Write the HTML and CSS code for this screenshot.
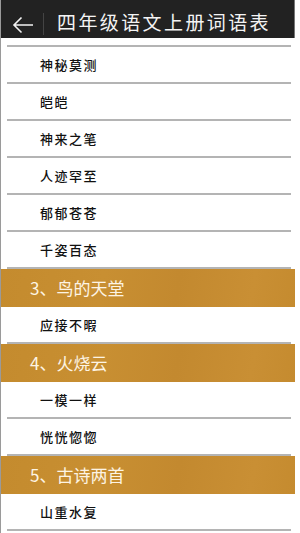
FILE: index.html
```html
<!DOCTYPE html>
<html lang="zh-CN">

<head>
    <meta charset="UTF-8">
    <meta name="viewport" content="width=device-width, initial-scale=1.0">
    <link rel="stylesheet" href="styles.css">
</head>

<body>
    <div class="screen">
        <div class="topbar">
            <span class="back">
                <svg width="22" height="18" viewBox="0 0 22 18">
                    <path d="M21 9H2M9.5 1.5L2 9l7.5 7.5" fill="none" stroke="#f2f2f2" stroke-width="1.6" />
                </svg>
            </span>
            <span class="divider"></span>
            <h1 class="title">四年级语文上册词语表</h1>
        </div>

        <ul class="words">
            <li class="word">神秘莫测</li>
            <li class="word">皑皑</li>
            <li class="word">神来之笔</li>
            <li class="word">人迹罕至</li>
            <li class="word">郁郁苍苍</li>
            <li class="word">千姿百态</li>
            <li class="lesson">3、鸟的天堂</li>
            <li class="word">应接不暇</li>
            <li class="lesson">4、火烧云</li>
            <li class="word">一模一样</li>
            <li class="word">恍恍惚惚</li>
            <li class="lesson">5、古诗两首</li>
            <li class="word">山重水复</li>
        </ul>
    </div>
</body>

</html>
```

FILE: styles.css
```css
html {
    background-color: #fff;
    font-family: "Noto Sans CJK SC", "Noto Sans", sans-serif;
}

body {
    margin: 0;
}

.screen {
    width: 295px;
    height: 533px;
    overflow: hidden;
    border-left: 1px solid #9a9a9a;
    box-sizing: border-box;
}

.topbar {
    height: 38px;
    background-color: #222;
    border-right: 1px solid #777;
    display: flex;
    align-items: center;
    padding-top: 4px;
    box-sizing: border-box;
}

.back {
    width: 40px;
    display: flex;
    justify-content: center;
    padding-left: 2px;
    padding-top: 8px;
}

.divider {
    width: 1px;
    height: 22px;
    margin-top: 6px;
    background-color: #444;
}

.title {
    margin: 0 0 0 13px;
    font-size: 19px;
    font-weight: normal;
    letter-spacing: 2.4px;
    color: #f4f4f4;
    line-height: 1;
}

.words {
    list-style: none;
    margin: 7px 0 0;
    padding: 0;
    border-top: 2px solid #b4b4b4;
    margin-left: 6px;
    margin-right: 4px;
}

.word {
    height: 35px;
    line-height: 35px;
    padding-left: 33px;
    font-size: 13px;
    font-weight: 500;
    letter-spacing: 1.5px;
    color: #111;
    border-bottom: 2px solid #b4b4b4;
}

.lesson {
    height: 38px;
    line-height: 38px;
    margin-left: -7px;
    margin-right: -4px;
    padding-left: 30px;
    font-size: 17px;
    color: #fdf4e4;
    background: linear-gradient(100deg, #c48b2e 0%, #c88f32 35%, #c3892f 60%, #c98f34 85%, #c58b2f 100%);
}
```
